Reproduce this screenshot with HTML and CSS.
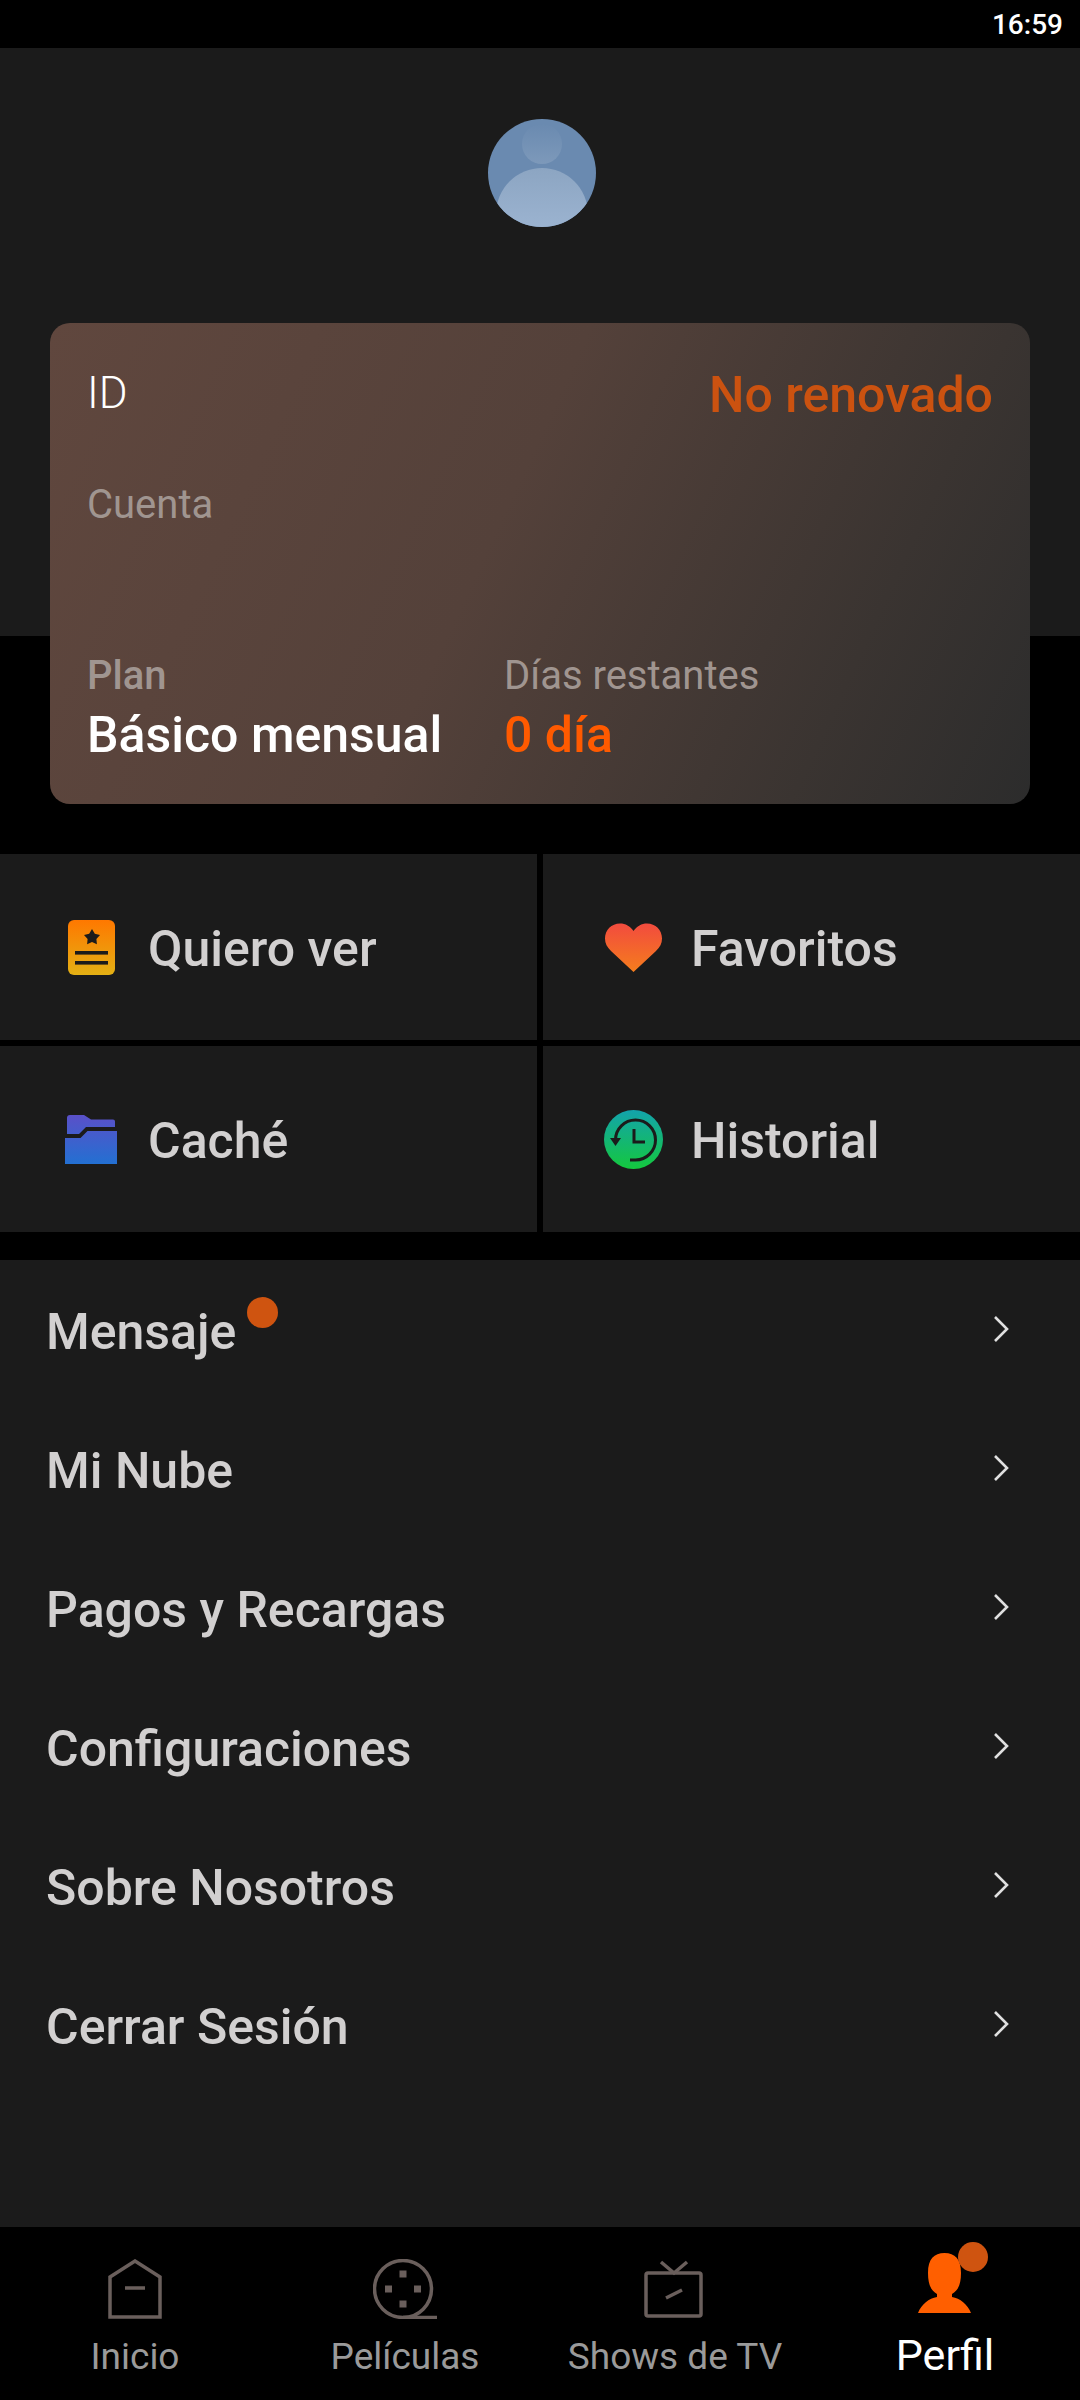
FILE: index.html
```html
<!DOCTYPE html>
<html lang="es">
<head>
  <meta charset="UTF-8">
  <title>Perfil</title>
  <link rel="stylesheet" href="styles.css">
</head>
<body>
  <div class="app">
    <!-- Status bar -->
    <div class="status-bar">16:59</div>

    <!-- Avatar + subscription card -->
    <div class="profile">
      <svg class="avatar" viewBox="0 0 108 108">
        <defs>
          <clipPath id="avatar-clip"><circle cx="54" cy="54" r="54"/></clipPath>
          <linearGradient id="avatar-head" x1="0" y1="0" x2="0" y2="1">
            <stop offset="0" stop-color="#6a8ab0"/>
            <stop offset="1" stop-color="#7d99ba"/>
          </linearGradient>
          <linearGradient id="avatar-body" x1="0" y1="0" x2="0" y2="1">
            <stop offset="0" stop-color="#8ca5c2"/>
            <stop offset="0.6" stop-color="#9ab2cf"/>
          </linearGradient>
        </defs>
        <g clip-path="url(#avatar-clip)">
          <rect width="108" height="108" fill="#6a8ab0"/>
          <circle cx="54" cy="25" r="20" fill="url(#avatar-head)"/>
          <circle cx="54" cy="95" r="46" fill="url(#avatar-body)"/>
        </g>
      </svg>

      <div class="card">
        <div class="card-top">
          <span class="card-id">ID</span>
          <span class="card-state">No renovado</span>
        </div>
        <div class="card-account">Cuenta</div>
        <div class="card-plan">
          <div>
            <div class="card-label card-label-strong">Plan</div>
            <div class="card-value">Básico mensual</div>
          </div>
          <div>
            <div class="card-label">Días restantes</div>
            <div class="card-value card-value-orange">0 día</div>
          </div>
        </div>
      </div>
    </div>

    <!-- Shortcuts -->
    <div class="shortcuts">
      <div class="shortcut">
        <svg class="shortcut-icon icon-watch" viewBox="0 0 47 55">
          <defs>
            <linearGradient id="watch-grad" x1="0" y1="0" x2="0" y2="1">
              <stop offset="0" stop-color="#ff7800"/>
              <stop offset="1" stop-color="#e3b014"/>
            </linearGradient>
          </defs>
          <rect width="47" height="55" rx="6" fill="url(#watch-grad)"/>
          <path d="M24 9l2.800 4.800 5.200 1.200-3.600 4 .5 5.200-4.900-2.200-4.900 2.200.5-5.200-3.600-4 5.200-1.200z" fill="#1b1b1b"/>
          <rect x="7" y="31" width="33" height="3.600" fill="#1b1b1b"/>
          <rect x="7" y="41" width="33" height="3.600" fill="#1b1b1b"/>
        </svg>
        <span>Quiero ver</span>
      </div>
      <div class="shortcut shortcut-right">
        <svg class="shortcut-icon icon-heart" viewBox="0 0 57 49">
          <defs>
            <linearGradient id="heart-grad" x1="0" y1="0" x2="0" y2="1">
              <stop offset="0" stop-color="#f24b3e"/>
              <stop offset="1" stop-color="#f57d1d"/>
            </linearGradient>
          </defs>
          <path d="M28.500 8C25 3 20.500 0.500 15 0.500 6.500 0.500 0 7 0 15.500c0 5 2 8.500 6 12.500l22.500 21L51 28c4-4 6-7.500 6-12.500C57 7 50.500 0.500 42 0.500 36.500 0.500 32 3 28.500 8z" fill="url(#heart-grad)"/>
        </svg>
        <span>Favoritos</span>
      </div>
      <div class="shortcut">
        <svg class="shortcut-icon icon-folder" viewBox="0 0 52 49">
          <defs>
            <linearGradient id="folder-grad" x1="0" y1="0" x2="0" y2="49" gradientUnits="userSpaceOnUse">
              <stop offset="0" stop-color="#5a50c8"/>
              <stop offset="1" stop-color="#2370d2"/>
            </linearGradient>
          </defs>
          <path d="M2 3a3 3 0 0 1 3-3h14l7 4.500h22a2 2 0 0 1 2 2V12H21l-7 7H2z" fill="url(#folder-grad)"/>
          <path d="M0 23h15.500l7-7H52v33H0z" fill="url(#folder-grad)"/>
        </svg>
        <span>Caché</span>
      </div>
      <div class="shortcut shortcut-right">
        <svg class="shortcut-icon icon-clock" viewBox="0 0 59 59">
          <defs>
            <linearGradient id="clock-grad" x1="0" y1="0" x2="0" y2="1">
              <stop offset="0" stop-color="#13a3ac"/>
              <stop offset="1" stop-color="#14c83e"/>
            </linearGradient>
          </defs>
          <circle cx="29.500" cy="29.500" r="29.500" fill="url(#clock-grad)"/>
          <path d="M11.500 30a20 20 0 1 1 20 20H26" fill="none" stroke="#1b1b1b" stroke-width="3"/>
          <path d="M6 28h11l-5.500 8z" fill="#1b1b1b"/>
          <path d="M30 19v13h11" fill="none" stroke="#1b1b1b" stroke-width="3"/>
        </svg>
        <span>Historial</span>
      </div>
    </div>

    <!-- Menu list -->
    <div class="menu-list">
      <div class="menu-row">
        <span class="menu-label">Mensaje<i class="menu-dot"></i></span>
        <svg class="chevron" viewBox="0 0 16 28"><path d="M2 2l12 12L2 26"/></svg>
      </div>
      <div class="menu-row">
        <span class="menu-label">Mi Nube</span>
        <svg class="chevron" viewBox="0 0 16 28"><path d="M2 2l12 12L2 26"/></svg>
      </div>
      <div class="menu-row">
        <span class="menu-label">Pagos y Recargas</span>
        <svg class="chevron" viewBox="0 0 16 28"><path d="M2 2l12 12L2 26"/></svg>
      </div>
      <div class="menu-row">
        <span class="menu-label">Configuraciones</span>
        <svg class="chevron" viewBox="0 0 16 28"><path d="M2 2l12 12L2 26"/></svg>
      </div>
      <div class="menu-row">
        <span class="menu-label">Sobre Nosotros</span>
        <svg class="chevron" viewBox="0 0 16 28"><path d="M2 2l12 12L2 26"/></svg>
      </div>
      <div class="menu-row">
        <span class="menu-label">Cerrar Sesión</span>
        <svg class="chevron" viewBox="0 0 16 28"><path d="M2 2l12 12L2 26"/></svg>
      </div>
    </div>

    <!-- Bottom tabs -->
    <div class="tab-bar">
      <div class="tab">
        <svg class="tab-icon" viewBox="0 0 64 60">
          <path d="M7 18L32 2l25 16v40H7z"/>
          <path d="M22 29h20"/>
        </svg>
        <span>Inicio</span>
      </div>
      <div class="tab">
        <svg class="tab-icon" viewBox="0 0 64 60">
          <circle cx="30" cy="30" r="28.500"/>
          <path d="M30 58.500h34"/>
          <g class="tab-icon-fill">
            <rect x="26.500" y="11.500" width="7" height="7"/>
            <rect x="26.500" y="41.500" width="7" height="7"/>
            <rect x="12" y="26.500" width="7" height="7"/>
            <rect x="41" y="26.500" width="7" height="7"/>
          </g>
        </svg>
        <span>Películas</span>
      </div>
      <div class="tab">
        <svg class="tab-icon" viewBox="0 0 64 60">
          <rect x="3" y="14" width="55" height="43" rx="2"/>
          <path d="M18 3l13 11L44 3"/>
          <path d="M23 39l16-8"/>
        </svg>
        <span>Shows de TV</span>
      </div>
      <div class="tab tab-active">
        <span class="tab-person">
          <svg class="tab-icon-person" viewBox="0 0 53 60">
            <path d="M26.500 0C37 0 43 6 43 20c0 12-3.500 18-9 21v3c8 1.500 15.500 7 19 16H0c3.500-9 11-14.500 19-16v-3c-5.500-3-9-9-9-21C10 6 16 0 26.500 0z"/>
          </svg>
          <i class="tab-badge"></i>
        </span>
        <span>Perfil</span>
      </div>
    </div>
  </div>
</body>
</html>
```

FILE: styles.css
```css
html, body {
  margin: 0;
  padding: 0;
  background: #000;
  font-family: Roboto, "Noto Sans", sans-serif;
}

.app {
  width: 1080px;
  height: 2400px;
  display: flex;
  flex-direction: column;
  overflow: hidden;
}

.status-bar {
  height: 48px;
  background: #000;
  color: #fff;
  font-size: 28px;
  font-weight: 500;
  line-height: 50px;
  text-align: right;
  padding-right: 17px;
}

.profile {
  height: 806px;
  background: linear-gradient(#1b1b1b 588px, #000 588px);
  display: flex;
  flex-direction: column;
  align-items: center;
}

.avatar {
  width: 108px;
  height: 108px;
  margin-top: 71px;
  margin-left: 4px;
}

.card {
  width: 980px;
  height: 481px;
  box-sizing: border-box;
  margin-top: 96px;
  padding: 52px 37px 0;
  border-radius: 20px;
  background: linear-gradient(115deg, #60473e 0%, #54413a 45%, #3a3431 80%, #2c2c2c 100%);
}

.card-top {
  display: flex;
  justify-content: space-between;
  align-items: center;
  height: 38px;
}

.card-id {
  margin-top: -2px;
  color: #fff;
  font-size: 44px;
  font-weight: 300;
}

.card-state {
  margin-top: 2px;
  color: #cb5210;
  font-size: 50px;
  font-weight: 500;
}

.card-account {
  margin-top: 70px;
  color: #a09590;
  font-size: 40px;
  line-height: 44px;
}

.card-plan {
  display: grid;
  grid-template-columns: 417px 1fr;
  margin-top: 127px;
}

.card-label {
  color: #a09590;
  font-size: 40px;
  line-height: 44px;
}

.card-label-strong {
  font-weight: 500;
}

.card-value {
  margin-top: 9px;
  color: #fff;
  font-size: 50px;
  font-weight: 500;
  line-height: 56px;
}

.card-value-orange {
  color: #ff5a00;
}

.shortcuts {
  display: grid;
  grid-template-columns: 537px 537px;
  grid-auto-rows: 186px;
  gap: 6px;
}

.shortcut {
  display: flex;
  align-items: center;
  background: #1b1b1b;
  color: #d2d0d0;
  font-size: 50px;
  font-weight: 500;
  padding-left: 68px;
}

.shortcut span {
  margin-top: 3px;
}

.shortcut-right {
  padding-left: 62px;
}

.shortcut-icon {
  flex: none;
}

.icon-watch {
  width: 47px;
  height: 55px;
  margin-right: 33px;
}

.icon-heart {
  width: 57px;
  height: 49px;
  margin-right: 29px;
}

.icon-folder {
  width: 52px;
  height: 49px;
  margin-left: -3px;
  margin-right: 31px;
}

.icon-clock {
  width: 59px;
  height: 59px;
  margin-left: -1px;
  margin-right: 28px;
}

.menu-list {
  margin-top: 28px;
  height: 967px;
  background: #1b1b1b;
}

.menu-row {
  height: 139px;
  display: flex;
  align-items: center;
  justify-content: space-between;
  padding: 0 71px 0 46px;
}

.menu-label {
  position: relative;
  top: 2px;
  color: #d2d0d0;
  font-size: 50px;
  font-weight: 500;
}

.menu-dot {
  position: absolute;
  top: -6px;
  right: -42px;
  width: 31px;
  height: 31px;
  border-radius: 50%;
  background: #cf5410;
}

.chevron {
  width: 16px;
  height: 28px;
  margin-top: -2px;
  fill: none;
  stroke: #e0e0e0;
  stroke-width: 2.600;
}

.tab-bar {
  flex: 1;
  display: grid;
  grid-template-columns: repeat(4, 270px);
  background: #000;
}

.tab {
  display: flex;
  flex-direction: column;
  align-items: center;
  padding-top: 32px;
  color: #9a9a9a;
  font-size: 37px;
  line-height: 44px;
}

.tab-icon {
  width: 64px;
  height: 60px;
  margin-bottom: 16px;
  fill: none;
  stroke: #6a5f5c;
  stroke-width: 3.500;
}

.tab-icon-fill {
  fill: #6a5f5c;
  stroke: none;
}

.tab-active {
  color: #fff;
  font-size: 43px;
}

.tab-person {
  position: relative;
  display: block;
  left: -1px;
  width: 53px;
  height: 60px;
  margin-top: -6px;
  margin-bottom: 20px;
}

.tab-icon-person {
  display: block;
  width: 53px;
  height: 60px;
  fill: #ff5f00;
}

.tab-badge {
  position: absolute;
  top: -11px;
  left: 40px;
  width: 30px;
  height: 30px;
  border-radius: 50%;
  background: #cf5410;
}
```
